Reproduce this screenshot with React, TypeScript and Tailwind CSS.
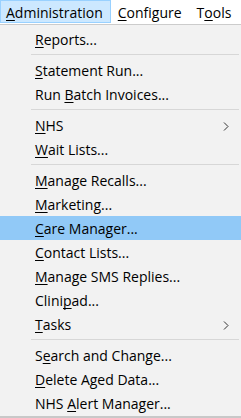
import React from "react";

type Item = { pre: string; key: string; post: string; sub?: boolean; active?: boolean } | "sep";

const items: Item[] = [
  { pre: "", key: "R", post: "eports..." },
  "sep",
  { pre: "", key: "S", post: "tatement Run..." },
  { pre: "Run ", key: "B", post: "atch Invoices..." },
  "sep",
  { pre: "", key: "N", post: "HS", sub: true },
  { pre: "", key: "W", post: "ait Lists..." },
  "sep",
  { pre: "", key: "M", post: "anage Recalls..." },
  { pre: "", key: "M", post: "arketing..." },
  { pre: "", key: "C", post: "are Manager...", active: true },
  { pre: "", key: "C", post: "ontact Lists..." },
  { pre: "", key: "M", post: "anage SMS Replies..." },
  { pre: "Clini", key: "p", post: "ad..." },
  { pre: "", key: "T", post: "asks", sub: true },
  "sep",
  { pre: "S", key: "e", post: "arch and Change..." },
  { pre: "", key: "D", post: "elete Aged Data..." },
  { pre: "NHS ", key: "A", post: "lert Manager..." },
];

const U = ({ children }: { children: React.ReactNode }) => (
  <span className="underline underline-offset-2 decoration-1 [text-decoration-skip-ink:none]">{children}</span>
);

const Chevron = () => (
  <svg width="6" height="9" viewBox="0 0 6 9" className="shrink-0">
    <path d="M1 0.5 L5 4.5 L1 8.5" fill="none" stroke="#333" strokeWidth="1" />
  </svg>
);

export default function App() {
  return (
    <div className="w-[241px] h-[418px] overflow-hidden bg-[#f2f2f2] text-black text-[14px] leading-none font-['Open_Sans','Noto_Sans',sans-serif]">
      <div className="h-[24px] bg-white flex items-start">
        <div className="h-[23px] pl-[5px] pr-[7px] pt-[2px] bg-[#cce8ff] border border-[#99d1ff] flex items-center">
          <span><U>A</U>dministration</span>
        </div>
        <div className="h-[23px] pl-[7px] pr-[8px] pt-[2px] flex items-center">
          <span><U>C</U>onfigure</span>
        </div>
        <div className="h-[23px] pl-[7px] pr-[7px] pt-[2px] flex items-center">
          <span>T<U>o</U>ols</span>
        </div>
      </div>
      <div className="border-t border-[#cccccc] border-b-2 border-b-[#c8c8c8] pt-[2px] pb-[1px]">
        {items.map((it, i) =>
          it === "sep" ? (
            <div key={i} className="h-[7px] pt-[3px] pl-[31px] pr-[2px]">
              <div className="h-px bg-[#d7d7d7]" />
            </div>
          ) : (
            <div
              key={i}
              className={
                "h-[24px] flex items-center justify-between pl-[35px] pr-[12px] pt-[2px] " +
                (it.active ? "bg-[#91c9f7]" : "")
              }
            >
              <span>
                {it.pre}
                <U>{it.key}</U>
                {it.post}
              </span>
              {it.sub ? <Chevron /> : null}
            </div>
          )
        )}
      </div>
    </div>
  );
}
